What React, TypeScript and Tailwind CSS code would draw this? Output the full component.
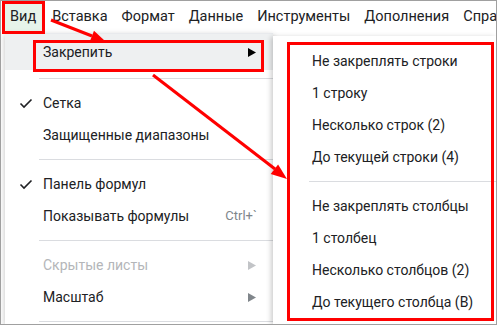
import React from "react";

const bar = ["Вставка", "Формат", "Данные", "Инструменты", "Дополнения", "Справка"];

function Check() {
  return (
    <svg width="14" height="11" viewBox="0 0 14 11" className="text-[#202124]">
      <path d="M1.5 5.5 L5 9 L12.5 1.5" fill="none" stroke="currentColor" strokeWidth="1.6" />
    </svg>
  );
}

function Tri({ cls }: { cls: string }) {
  return (
    <svg width="8" height="9" viewBox="0 0 8 9" className={cls}>
      <path d="M0 0 L8 4.5 L0 9 Z" fill="currentColor" />
    </svg>
  );
}

function Sep({ cls = "" }: { cls?: string }) {
  return <div className={"my-2 h-px bg-[#dadce0] " + cls} />;
}

type Item = { label: string; check?: boolean; hint?: string; sub?: boolean; off?: boolean };

function Row({ it }: { it: Item }) {
  return (
    <div className="flex h-8 items-center pr-4">
      <div className="flex w-[38px] justify-end pr-[10px]">{it.check && <Check />}</div>
      <span className={"flex-1 " + (it.off ? "text-[#b4b6b9]" : "text-[#202124]")}>{it.label}</span>
      {it.hint && <span className="text-[13px] text-[#80868b]">{it.hint}</span>}
      {it.sub && <Tri cls={it.off ? "mr-[1px] text-[#c2c4c7]" : "mr-[1px] text-[#80868b]"} />}
    </div>
  );
}

export default function App() {
  const rows = ["Не закреплять строки", "1 строку", "Несколько строк (2)", "До текущей строки (4)"];
  const cols = ["Не закреплять столбцы", "1 столбец", "Несколько столбцов (2)", "До текущего столбца (В)"];

  return (
    <div
      className="relative h-[325px] w-[497px] overflow-hidden border border-[#a0a0a0] bg-white text-[14px] text-[#202124]"
      style={{ fontFamily: "Roboto, 'Noto Sans', sans-serif" }}
    >
      {/* menu bar */}
      <div className="flex h-[32px] items-center whitespace-nowrap pl-[4px] text-[14.5px]">
        <div className="flex h-[28px] items-center bg-[#e6f4ea] pl-[5px] pr-[6px]">Вид</div>
        <div className="ml-[3px] flex">
          {bar.map((b) => (
            <div key={b} className="px-[7px]">
              {b}
            </div>
          ))}
        </div>
      </div>

      <div className="flex h-[291px]">
        {/* bit of sheet behind */}
        <div className="w-[4px] bg-white" />

        {/* main menu */}
        <div className="w-[268px] border-t border-[#e8eaed] bg-white shadow-[0_2px_6px_rgba(0,0,0,0.25)]">
          <div className="flex h-[36px] items-center bg-[#eef0f1] pr-4">
            <span className="w-[38px]" />
            <span className="flex-1">Закрепить</span>
            <Tri cls="mr-[1px] text-[#000]" />
          </div>
          <Sep cls="ml-[34px]" />
          <Row it={{ label: "Сетка", check: true }} />
          <Row it={{ label: "Защищенные диапазоны" }} />
          <Sep cls="ml-[34px]" />
          <Row it={{ label: "Панель формул", check: true }} />
          <Row it={{ label: "Показывать формулы", hint: "Ctrl+`" }} />
          <Sep cls="ml-[34px]" />
          <Row it={{ label: "Скрытые листы", sub: true, off: true }} />
          <Row it={{ label: "Масштаб", sub: true }} />
          <Sep cls="ml-[34px]" />
        </div>

        {/* submenu */}
        <div className="relative mt-[3px] flex-1 bg-white pt-[9px] shadow-[-2px_1px_5px_rgba(0,0,0,0.2)]">
          {rows.map((r) => (
            <div key={r} className="flex h-8 items-center pl-[39px]">{r}</div>
          ))}
          <Sep cls="ml-[36px]" />
          {cols.map((c) => (
            <div key={c} className="flex h-8 items-center pl-[39px]">{c}</div>
          ))}
        </div>
      </div>

      {/* annotation boxes */}
      <div className="absolute left-[1px] top-0 h-[33px] w-[43px] border-[3px] border-[#ff0000]" />
      <div className="absolute left-[32px] top-[39px] h-[32px] w-[231px] border-[3px] border-[#ff0000]" />
      <div className="absolute left-[286px] top-[41px] h-[279px] w-[207px] border-[3px] border-[#ff0000]" />

      <svg className="pointer-events-none absolute left-0 top-0" width="497" height="325">
        <line x1="50" y1="19" x2="91" y2="35" stroke="#ff0000" strokeWidth="3" />
        <polygon points="104,40 89,40 93,29.8" fill="#ff0000" />
        <line x1="152" y1="74" x2="274" y2="168" stroke="#ff0000" strokeWidth="3" />
        <polygon points="286,178 269.7,172.9 277.1,163.5" fill="#ff0000" />
      </svg>
    </div>
  );
}
